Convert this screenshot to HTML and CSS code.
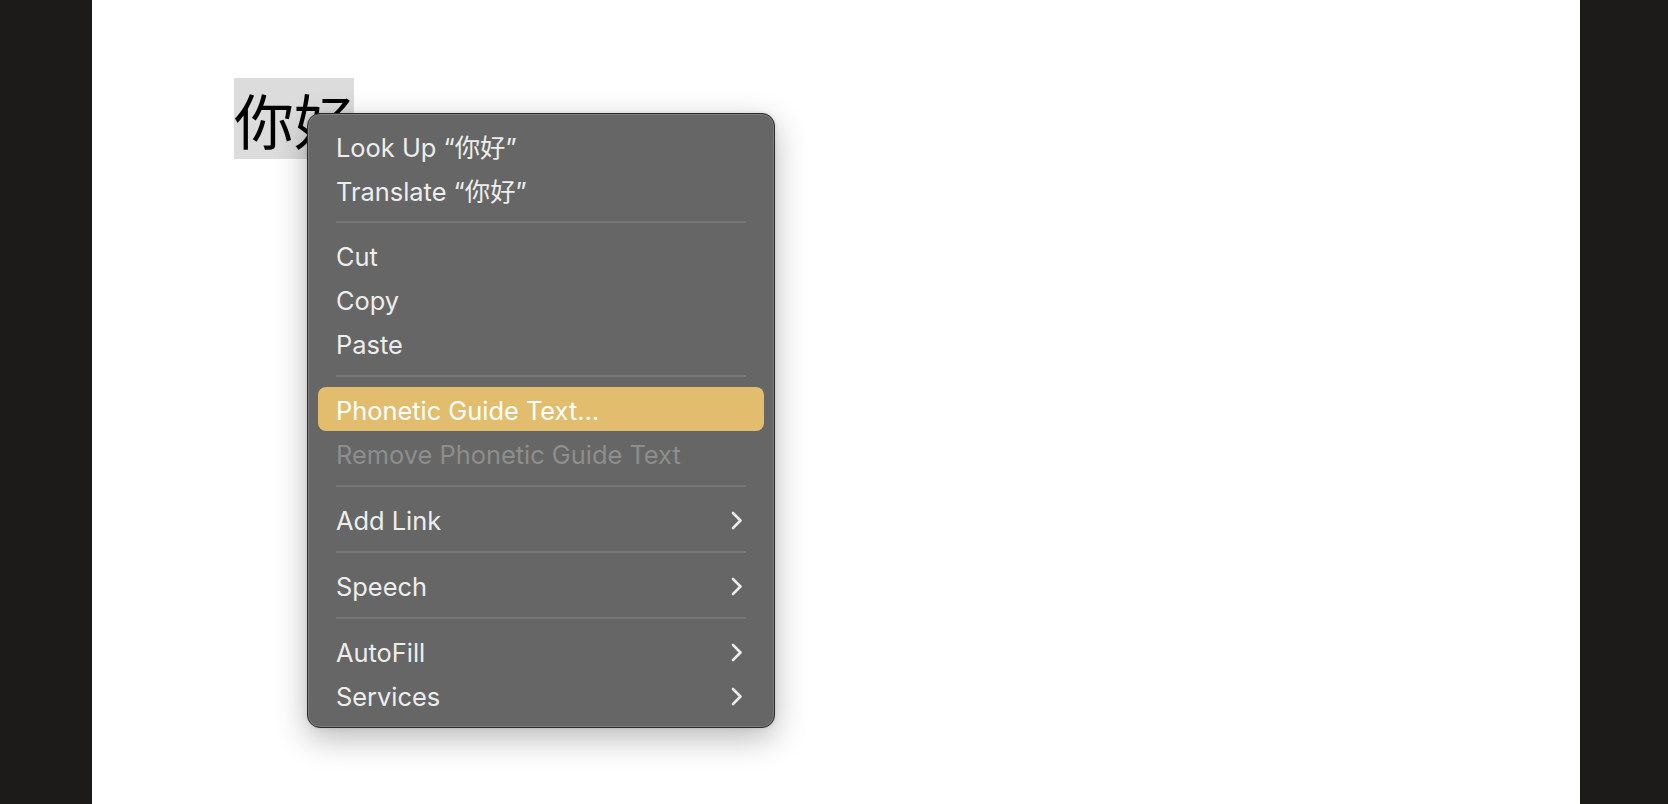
FILE: index.html
```html
<!DOCTYPE html>
<html lang="en">
<head>
<meta charset="utf-8">
<title>Context menu</title>
<link rel="stylesheet" href="styles.css">
</head>
<body>
<div class="screen">
  <div class="side"></div>
  <main class="doc">
    <p class="line"><span class="sel">你好</span></p>
    <div class="menu">
      <div class="item">Look Up “你好”</div>
      <div class="item">Translate “你好”</div>
      <div class="sep"></div>
      <div class="item">Cut</div>
      <div class="item">Copy</div>
      <div class="item">Paste</div>
      <div class="sep"></div>
      <div class="item active">Phonetic Guide Text…</div>
      <div class="item disabled">Remove Phonetic Guide Text</div>
      <div class="sep"></div>
      <div class="item">Add Link<svg class="chev" viewBox="0 0 12 19"><path d="M2 2 L9.5 9.5 L2 17"/></svg></div>
      <div class="sep"></div>
      <div class="item">Speech<svg class="chev" viewBox="0 0 12 19"><path d="M2 2 L9.5 9.5 L2 17"/></svg></div>
      <div class="sep"></div>
      <div class="item">AutoFill<svg class="chev" viewBox="0 0 12 19"><path d="M2 2 L9.5 9.5 L2 17"/></svg></div>
      <div class="item">Services<svg class="chev" viewBox="0 0 12 19"><path d="M2 2 L9.5 9.5 L2 17"/></svg></div>
    </div>
  </main>
  <div class="side"></div>
</div>
</body>
</html>
```
FILE: styles.css
```css
html, body {
  margin: 0;
  padding: 0;
  background: #1c1b19;
}
.screen {
  display: flex;
  width: 1668px;
  height: 804px;
  overflow: hidden;
}
.side {
  flex: 0 0 92px;
  background: #1c1b19;
}
.side:last-child {
  flex-basis: 88px;
}
.doc {
  flex: 1 1 auto;
  position: relative;
  background: #ffffff;
  padding: 78px 0 0 142px;
  box-sizing: border-box;
}
.line {
  margin: 0;
  font-family: "Noto Sans CJK SC", sans-serif;
  font-size: 60px;
  line-height: 81px;
  color: #000;
}
.sel {
  display: inline-block;
  background: #dcdcdc;
  height: 81px;
}
.menu {
  position: absolute;
  left: 215px;
  top: 113px;
  width: 468px;
  box-sizing: border-box;
  padding: 9px 10px 10px;
  background: #656665;
  border: 1px solid #2b2b2b;
  border-radius: 13px;
  box-shadow: inset 0 0 0 1px rgba(255,255,255,0.16), 0 10px 32px rgba(0,0,0,0.28), 0 0 4px rgba(0,0,0,0.12);
  font-family: "Inter", "Noto Sans CJK SC", sans-serif;
  font-size: 25.4px;
  color: #eeeeee;
}
.item {
  display: flex;
  align-items: center;
  justify-content: space-between;
  height: 44px;
  padding: 2px 21px 0 18px;
  box-sizing: border-box;
  border-radius: 8px;
  white-space: nowrap;
}
.item.active {
  background: #e2bd6e;
  color: #ffffff;
}
.item.disabled {
  color: #8d8e8d;
}
.sep {
  height: 22px;
  display: flex;
  align-items: center;
  padding: 0 18px;
}
.sep::before {
  content: "";
  flex: 1;
  height: 2px;
  background: #777877;
}
.chev {
  width: 12px;
  height: 19px;
  fill: none;
  stroke: #eeeeee;
  stroke-width: 2.6;
  stroke-linecap: round;
  stroke-linejoin: round;
}
```
